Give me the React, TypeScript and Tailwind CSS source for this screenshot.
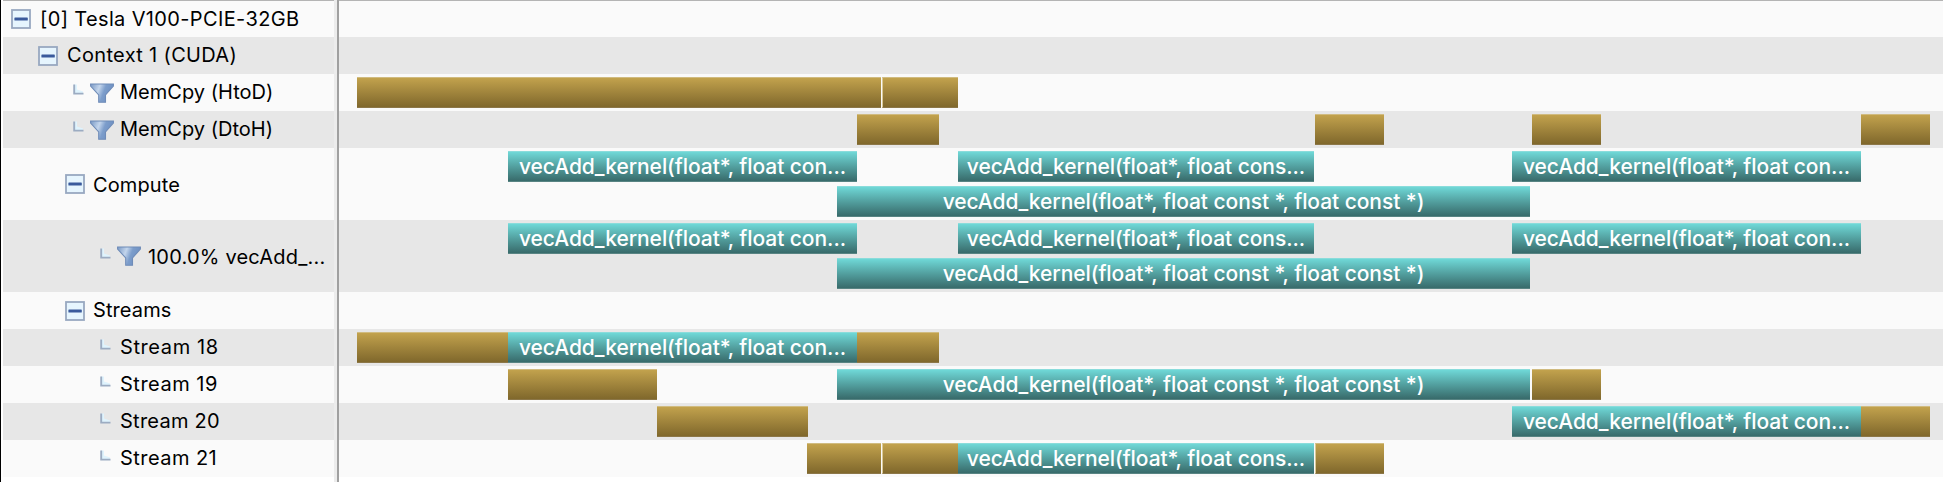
import React from "react";

type Kind = "copy" | "kernel";
type Bar = { kind: Kind; start: number; end: number; label?: string };
type Icon = "toggle" | "leaf" | "filter";
type Row = { label: string; icon: Icon; indent: string; text: string; lanes: Bar[][] };

const FULL = "vecAdd_kernel(float*, float const *, float const *)";
const SHORT = "vecAdd_kernel(float*, float con...";
const MEDIUM = "vecAdd_kernel(float*, float cons...";

const copy = (start: number, end: number): Bar => ({ kind: "copy", start, end });
const kernel = (start: number, end: number, label: string): Bar => ({ kind: "kernel", start, end, label });

const k18 = kernel(508, 857, SHORT);
const k21 = kernel(958, 1314, MEDIUM);
const k20 = kernel(1512, 1861, SHORT);
const k19 = kernel(837, 1530, FULL);
const computeLanes = [[k18, k21, k20], [k19]];

const rows: Row[] = [
  { label: "[0] Tesla V100-PCIE-32GB", icon: "toggle", indent: "pl-[8px]", text: "ml-px tracking-[0.36px]", lanes: [[]] },
  { label: "Context 1 (CUDA)", icon: "toggle", indent: "pl-[35px]", text: "ml-px tracking-[0.33px]", lanes: [[]] },
  { label: "MemCpy (HtoD)", icon: "filter", indent: "pl-[70px]", text: "tracking-[0.02px]", lanes: [[copy(357, 881), copy(882, 958)]] },
  { label: "MemCpy (DtoH)", icon: "filter", indent: "pl-[70px]", text: "tracking-[0.02px]", lanes: [[copy(857, 939), copy(1315, 1384), copy(1532, 1601), copy(1861, 1930)]] },
  { label: "Compute", icon: "toggle", indent: "pl-[62px]", text: "tracking-[0.1px]", lanes: computeLanes },
  { label: "100.0% vecAdd_...", icon: "filter", indent: "pl-[97px]", text: "ml-px tracking-[0.2px]", lanes: computeLanes },
  { label: "Streams", icon: "toggle", indent: "pl-[62px]", text: "tracking-[0.1px]", lanes: [[]] },
  { label: "Stream 18", icon: "leaf", indent: "pl-[97px]", text: "ml-[9px] tracking-[0.6px]", lanes: [[copy(357, 508), k18, copy(857, 939)]] },
  { label: "Stream 19", icon: "leaf", indent: "pl-[97px]", text: "ml-[9px] tracking-[0.5px]", lanes: [[copy(508, 657), k19, copy(1532, 1601)]] },
  { label: "Stream 20", icon: "leaf", indent: "pl-[97px]", text: "ml-[9px] tracking-[0.25px]", lanes: [[copy(657, 808), k20, copy(1861, 1930)]] },
  { label: "Stream 21", icon: "leaf", indent: "pl-[97px]", text: "ml-[9px] tracking-[0.45px]", lanes: [[copy(807, 881), copy(882, 958), k21, copy(1315, 1384)]] },
];

function Toggle() {
  return (
    <svg width="20" height="20" viewBox="0 0 20 20" className="mr-[8px] shrink-0">
      <rect x="1" y="1" width="18" height="18" fill="#e6f5fe" stroke="#98a8c0" strokeWidth="1.8" />
      <rect x="3.4" y="8.4" width="13.4" height="3.2" rx="0.6" fill="#3a5a9c" />
    </svg>
  );
}

function Elbow() {
  return (
    <svg width="11" height="11" viewBox="0 0 11 11" className="shrink-0 -translate-y-[3px]">
      <path d="M1 0.5H4V5.5L10 7.5V9H1Z" fill="#dff3fd" />
      <path d="M1.2 0.5V9.6H10.5" fill="none" stroke="#9cacc2" strokeWidth="1.9" />
    </svg>
  );
}

function Filter() {
  return (
    <svg width="24" height="20" viewBox="0 0 24 20" className="mr-[6px] ml-[6px] shrink-0">
      <defs>
        <linearGradient id="funnel" x1="0" x2="1" y1="0" y2="0.3">
          <stop offset="0" stopColor="#7898c4" />
          <stop offset="0.4" stopColor="#c3d5ec" />
          <stop offset="0.65" stopColor="#7c9dcb" />
          <stop offset="1" stopColor="#6e90c2" />
        </linearGradient>
      </defs>
      <path d="M0.6 1H23.4V3L15.5 12V19.2H8.7V12L0.6 3Z" fill="url(#funnel)" stroke="#6f8cb8" strokeWidth="1.1" />
    </svg>
  );
}

function Lane({ bars }: { bars: Bar[] }) {
  return (
    <div className="flex h-[31px]">
      {bars.map((bar, i) => {
        const gap = bar.start - (i ? bars[i - 1].end : 339);
        const seam = gap === 1 ? "border-l border-l-[#dccb99]" : "";
        return (
          <div
            key={i}
            className={
              bar.kind === "copy"
                ? `h-full shrink-0 border-t border-b border-t-[#d0bb80] border-b-[#8c7748] bg-linear-to-b from-[#c2a24d] to-[#80682c] ${seam}`
                : "flex h-full shrink-0 items-center justify-center border-t border-b border-t-[#8adcdb] border-b-[#588483] bg-linear-to-b from-[#6fd8d7] to-[#386b6b] pt-px text-[21px] font-medium tracking-[-0.06px] whitespace-nowrap text-white"
            }
            style={{ width: bar.end - bar.start, marginLeft: gap }}
          >
            {bar.label && <span>{bar.label}</span>}
          </div>
        );
      })}
    </div>
  );
}

export default function App() {
  return (
    <div className="h-[482px] w-[1943px] overflow-hidden border-l border-black bg-white font-['Inter','Liberation_Sans',sans-serif]">
      {rows.map((row, i) => {
        const shade = i % 2 ? "bg-[#e7e7e7]" : "bg-[#fafafa]";
        const top = i === 0 ? "border-t border-[#b4b4b4]" : "";
        const tall = row.lanes.length > 1;
        return (
          <div key={i} className={tall ? "flex h-[72px]" : "flex h-[37px]"}>
            <div className={`ml-[2px] flex w-[331px] items-center ${top} ${shade}`}>
              <div className={`flex items-center text-[20px] leading-[28px] whitespace-nowrap text-black ${row.indent}`}>
                {row.icon === "toggle" ? <Toggle /> : <Elbow />}
                {row.icon === "filter" && <Filter />}
                <span className={`${tall ? "pt-[2px]" : "pb-px"} ${row.text}`}>{row.label}</span>
              </div>
            </div>
            <div className="w-[5px] border-r-2 border-[#a0a0a0] bg-[#ececec]" />
            <div className={`flex flex-1 flex-col gap-1 ${i === 0 ? "" : "pt-[3px]"} ${top} ${shade}`}>
              {row.lanes.map((bars, j) => (
                <Lane key={j} bars={bars} />
              ))}
            </div>
          </div>
        );
      })}
      <div className="ml-[333px] h-[5px] w-[5px] border-r-2 border-[#a0a0a0] bg-[#ececec]" />
    </div>
  );
}
